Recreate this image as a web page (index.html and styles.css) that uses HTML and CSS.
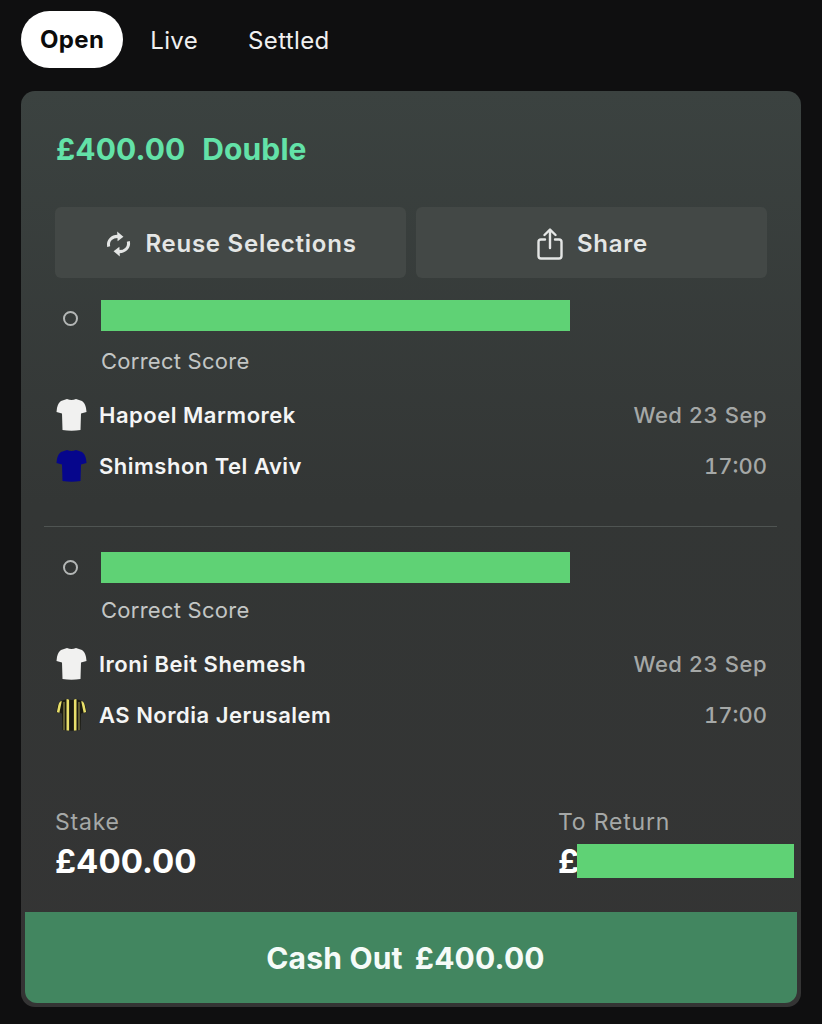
FILE: index.html
```html
<!DOCTYPE html>
<html lang="en">
  <head>
    <meta charset="UTF-8" />
    <meta name="viewport" content="width=device-width, initial-scale=1.0" />
    <title>My Bets</title>
    <link rel="stylesheet" href="styles.css">
  </head>
  <body>
    <svg class="defs" width="0" height="0">
      <defs>
        <path id="shirt" d="M11 1 L5 3 Q2 5 1 10 L0.5 14 L6 15.5 L6.5 32 Q15.5 33.5 24.5 32 L25 15.5 L30.5 14 L30 10 Q29 5 26 3 L20 1 Q15.5 3 11 1 Z" />
        <clipPath id="shirtClip"><use href="#shirt" /></clipPath>
      </defs>
    </svg>

    <nav class="tabs">
      <a class="tab active">Open</a>
      <a class="tab">Live</a>
      <a class="tab">Settled</a>
    </nav>

    <section class="card">
      <h1 class="title"><span>£400.00</span><span>Double</span></h1>

      <div class="actions">
        <button class="action">
          <svg class="icon" width="25" height="30" viewBox="0 0 28 30" fill="none" stroke="currentColor" stroke-width="3.4">
            <path d="M3 18 C1.5 11 7 6 14 6.5" />
            <path d="M25 12 C26.5 19 21 24 14 23.5" />
            <path d="M12.5 1 L19.5 6.8 L13 12 Z" fill="currentColor" stroke="none" />
            <path d="M15.5 29 L8.5 23.2 L15 18 Z" fill="currentColor" stroke="none" />
          </svg>
          Reuse Selections
        </button>
        <button class="action">
          <svg class="icon" width="26" height="32" viewBox="0 0 26 32" fill="none" stroke="currentColor" stroke-width="2.4" stroke-linecap="round" stroke-linejoin="round">
            <path d="M8 11.5 H4 Q1.5 11.5 1.5 14 V28 Q1.5 30.5 4 30.5 H22 Q24.5 30.5 24.5 28 V14 Q24.5 11.5 22 11.5 H18" />
            <path d="M13 20 V2 M7.5 7 L13 1.5 L18.5 7" />
          </svg>
          Share
        </button>
      </div>

      <div class="selection first">
        <div class="pick"><span class="dot"></span><span class="mask"></span></div>
        <p class="market">Correct Score</p>
        <div class="team">
          <svg class="shirt" width="31" height="34" viewBox="0 0 31 34"><use href="#shirt" fill="#f1f1f0" /></svg>
          <span class="name">Hapoel Marmorek</span>
          <span class="when">Wed 23 Sep</span>
        </div>
        <div class="team">
          <svg class="shirt" width="31" height="34" viewBox="0 0 31 34"><use href="#shirt" fill="#06068c" /></svg>
          <span class="name">Shimshon Tel Aviv</span>
          <span class="when time">17:00</span>
        </div>
      </div>

      <div class="selection second">
        <div class="pick"><span class="dot"></span><span class="mask"></span></div>
        <p class="market">Correct Score</p>
        <div class="team">
          <svg class="shirt" width="31" height="34" viewBox="0 0 31 34"><use href="#shirt" fill="#f1f1f0" /></svg>
          <span class="name">Ironi Beit Shemesh</span>
          <span class="when">Wed 23 Sep</span>
        </div>
        <div class="team">
          <svg class="shirt" width="31" height="34" viewBox="0 0 31 34">
            <g clip-path="url(#shirtClip)">
              <rect width="31" height="34" fill="#1b1b12" />
              <path d="M4.5 3 L2 15 M11.8 1 V33 M19.2 1 V33 M26.5 3 L29 15" stroke="#e8df6a" stroke-width="2.6" />
              <path d="M8 4 V33 M23 4 V33" stroke="#8f8a48" stroke-width="1.2" />
            </g>
          </svg>
          <span class="name">AS Nordia Jerusalem</span>
          <span class="when time">17:00</span>
        </div>
      </div>

      <div class="totals">
        <div class="total stake">
          <span class="label">Stake</span>
          <strong class="amount">£400.00</strong>
        </div>
        <div class="total">
          <span class="label">To Return</span>
          <strong class="amount">£</strong>
          <span class="return-mask"></span>
        </div>
      </div>

      <button class="cashout"><span>Cash Out</span><span>£400.00</span></button>
    </section>
  </body>
</html>
```

FILE: styles.css
```css
body {
  margin: 0;
  height: 1024px;
  padding: 11px 21px 0;
  box-sizing: border-box;
  overflow: hidden;
  background: #0f0f10;
  font-family: Inter, "Liberation Sans", sans-serif;
  color: #fff;
}
.defs {
  display: block;
}
.tabs {
  display: flex;
  align-items: center;
  height: 57px;
}
.tab {
  padding-top: 2px;
  font-size: 24px;
  line-height: 55px;
  letter-spacing: 0.35px;
  color: #f0f0f0;
  margin-left: 50px;
}
.tab:nth-child(2) {
  margin-left: 27px;
}
.tab.active {
  margin-left: 0;
  padding: 0 19px;
  line-height: 57px;
  border-radius: 29px;
  background: #fff;
  color: #0b0b0b;
  font-weight: 700;
}
.card {
  position: relative;
  box-sizing: border-box;
  height: 916px;
  margin-top: 23px;
  padding: 0 34px;
  border-radius: 14px;
  background: linear-gradient(#3b4240, #333635 45%, #343434);
}
.title {
  display: flex;
  gap: 17px;
  margin: 0;
  padding: 39px 0 0 1px;
  height: 77px;
  font-size: 30px;
  line-height: 38px;
  font-weight: 700;
  letter-spacing: 0.1px;
  color: #63e2a8;
}
.actions {
  display: flex;
  gap: 10px;
}
.action {
  flex: 1;
  height: 71px;
  display: flex;
  align-items: center;
  justify-content: center;
  gap: 14px;
  padding: 2px 0 0 2px;
  border: none;
  border-radius: 6px;
  background: #434846;
  color: #e4e6e5;
  font-family: inherit;
  font-size: 24px;
  font-weight: 600;
  letter-spacing: 0.75px;
}
.selection {
  padding-top: 22px;
}
.selection.first {
  padding-bottom: 35px;
}
.selection.first .dot {
  margin-top: 5px;
}
.selection.second {
  margin: 0 -10px 0 -11px;
  padding: 25px 10px 0 11px;
  border-top: 1px solid #4f5452;
}
.pick {
  display: flex;
  align-items: center;
  gap: 23px;
  height: 31px;
  padding-left: 8px;
}
.dot {
  box-sizing: border-box;
  width: 15px;
  height: 15px;
  border: 2px solid #b4b7b6;
  border-radius: 50%;
}
.mask {
  width: 469px;
  height: 31px;
  background: #5fd275;
}
.market {
  margin: 15px 0 13px 46px;
  font-size: 22px;
  line-height: 30px;
  letter-spacing: 0.25px;
  color: #c3c6c5;
}
.second .market {
  margin-top: 12px;
}
.team {
  display: flex;
  align-items: center;
  height: 51px;
  font-size: 22px;
  letter-spacing: 0.5px;
}
.shirt {
  margin: 0 12px 0 1px;
}
.name {
  flex: 1;
  font-weight: 600;
  color: #f4f5f5;
}
.when {
  font-weight: 500;
  font-variant-numeric: tabular-nums;
  color: #a5a8a7;
}
.when.time {
  letter-spacing: 0;
}
.totals {
  display: flex;
  margin-top: 65px;
}
.total {
  position: relative;
  display: flex;
  flex-direction: column;
}
.stake {
  width: 503px;
}
.label {
  font-size: 23px;
  line-height: 34px;
  letter-spacing: 0.8px;
  color: #a5a8a7;
}
.amount {
  font-size: 33px;
  line-height: 44px;
  font-weight: 700;
}
.return-mask {
  position: absolute;
  left: 19px;
  top: 39px;
  width: 217px;
  height: 34px;
  background: #5fd275;
}
.cashout {
  position: absolute;
  left: 4px;
  right: 4px;
  bottom: 4px;
  height: 91px;
  display: flex;
  align-items: center;
  justify-content: center;
  gap: 12px;
  padding: 0 11px 0 0;
  border: none;
  border-radius: 0 0 12px 12px;
  background: #428660;
  color: #f5fbf8;
  font-family: inherit;
  font-size: 30px;
  font-weight: 700;
  letter-spacing: 0.2px;
}
```
